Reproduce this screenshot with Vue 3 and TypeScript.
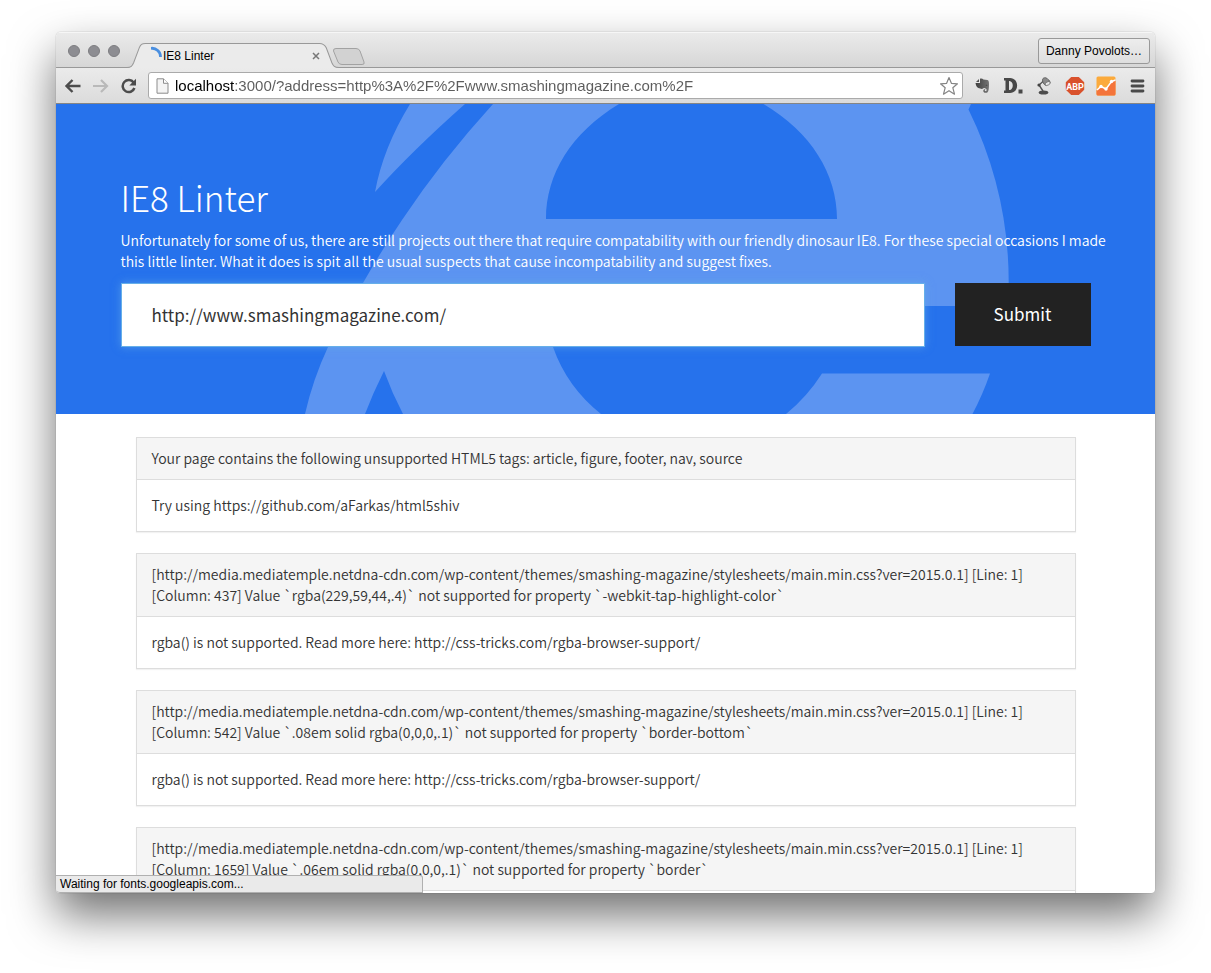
<script setup lang="ts">
import { ref } from 'vue'

interface Issue {
  title: string
  hint: string
}

const location = ref('localhost:3000/?address=http%3A%2F%2Fwww.smashingmagazine.com%2F')
const address = ref('http://www.smashingmagazine.com/')
const sheet =
  '[http://media.mediatemple.netdna-cdn.com/wp-content/themes/smashing-magazine/stylesheets/main.min.css?ver=2015.0.1]'
const rgbaHint = 'rgba() is not supported. Read more here: http://css-tricks.com/rgba-browser-support/'

const issues: Issue[] = [
  {
    title: 'Your page contains the following unsupported HTML5 tags: article, figure, footer, nav, source',
    hint: 'Try using https://github.com/aFarkas/html5shiv',
  },
  {
    title: `${sheet} [Line: 1] [Column: 437] Value \`rgba(229,59,44,.4)\` not supported for property \`-webkit-tap-highlight-color\``,
    hint: rgbaHint,
  },
  {
    title: `${sheet} [Line: 1] [Column: 542] Value \`.08em solid rgba(0,0,0,.1)\` not supported for property \`border-bottom\``,
    hint: rgbaHint,
  },
  {
    title: `${sheet} [Line: 1] [Column: 1659] Value \`.06em solid rgba(0,0,0,.1)\` not supported for property \`border\``,
    hint: '',
  },
]
</script>

<template>
  <div class="desktop">
    <div class="window">
      <header class="titlebar">
        <div class="lights">
          <button type="button" aria-label="Close window"></button>
          <button type="button" aria-label="Minimize window"></button>
          <button type="button" aria-label="Zoom window"></button>
        </div>
        <div class="tab">
          <svg class="tab-shape" viewBox="0 0 208 26" preserveAspectRatio="none" aria-hidden="true">
            <path d="M0 25.500C4 25.500 5 24 6.500 20.500L12 5C13.500 1.500 14.500.5 18 .5H189C192.500.5 194 2 195.500 5L201 20.500C202.500 24 203.500 25.500 208 25.500V26H0Z" fill="#ebebeb" />
            <path d="M0 25.500C4 25.500 5 24 6.500 20.500L12 5C13.500 1.500 14.500.5 18 .5H189C192.500.5 194 2 195.500 5L201 20.500C202.500 24 203.500 25.500 208 25.500" fill="none" stroke="#999" />
          </svg>
          <svg class="spinner" width="12" height="14" viewBox="0 0 12 14" aria-hidden="true">
            <path d="M0 2.300A8.500 8.500 0 0 1 9.500 11" fill="none" stroke="#4a8fe0" stroke-width="2.800" />
          </svg>
          <span class="tab-title">IE8 Linter</span>
          <button class="tab-close" type="button" aria-label="Close tab">
            <svg width="8" height="8" viewBox="0 0 8 8"><path d="M1 1L7 7M7 1L1 7" stroke="#777" stroke-width="1.500" /></svg>
          </button>
        </div>
        <button class="new-tab" type="button" aria-label="New tab">
          <svg width="34" height="18" viewBox="0 0 34 18">
            <path d="M4 .5H24Q27 .5 28 3L32 14Q33 16.500 30 16.500H10Q7 16.500 6 14L1.500 3Q1 .5 4 .5Z" fill="#d2d2d2" stroke="#a2a2a2" />
          </svg>
        </button>
        <button class="profile" type="button">Danny Povolots…</button>
      </header>

      <nav class="toolbar" aria-label="Browser toolbar">
        <button class="tool back" type="button" aria-label="Back">
          <svg width="18" height="16" viewBox="0 0 18 16"><path d="M16.500 8H3M8.500 2L2.500 8L8.500 14" fill="none" stroke="#4c4c4c" stroke-width="2.400" /></svg>
        </button>
        <button class="tool forward" type="button" aria-label="Forward">
          <svg width="18" height="16" viewBox="0 0 18 16"><path d="M1 8H14.500M9 2L15 8L9 14" fill="none" stroke="#b9b9b9" stroke-width="2.200" /></svg>
        </button>
        <button class="tool reload" type="button" aria-label="Reload">
          <svg width="18" height="16" viewBox="0 0 18 16">
            <path d="M13.600 4.600A6 6 0 1 0 14.400 10" fill="none" stroke="#4c4c4c" stroke-width="2.500" />
            <path d="M16 .8V7.500H9.300Z" fill="#4c4c4c" />
          </svg>
        </button>
        <div class="omnibox">
          <svg width="13" height="16" viewBox="0 0 13 16" aria-hidden="true">
            <path d="M1 .8H7.500L12 5.300V15.200H1Z" fill="#f4f4f4" stroke="#8c8c8c" />
            <path d="M7.500.8V5.300H12" fill="#fff" stroke="#8c8c8c" />
          </svg>
          <input v-model="location" type="text" aria-label="Location" spellcheck="false" />
          <button class="star" type="button" aria-label="Bookmark this page">
            <svg width="20" height="20" viewBox="0 0 20 20">
              <path d="M10 1.500L12.500 7.400L18.500 7.800L13.800 11.700L15.500 18.200L10 14.700L4.500 18.200L6.200 11.700L1.500 7.800L7.500 7.400Z" fill="#fff" stroke="#858585" stroke-width="1.200" stroke-linejoin="round" />
            </svg>
          </button>
        </div>
        <div class="extensions">
          <button class="tool" type="button" aria-label="Web clipper">
            <svg width="20" height="20" viewBox="0 0 20 20">
              <defs>
                <linearGradient id="clip-tone" x1="0" x2="1">
                  <stop offset="0" stop-color="#3e3e3e" />
                  <stop offset="1" stop-color="#757575" />
                </linearGradient>
              </defs>
              <path d="M7 3V6H4Z" fill="#555" />
              <path d="M8 2.700C9.500 2.400 10.800 2.700 11.400 3.500L15.500 4C16.800 4.300 17 6 17 8.500C17 12 16.700 15 15.600 16.200C14.600 17.300 11.300 17 11.300 14.900C11.300 13.400 12.600 13 13.500 13.600C13 14 12.600 14.300 12.800 14.800C13.300 15.500 14.700 15.200 14.700 14.100C14.600 12.500 12.600 12 11.600 12C11 13.200 9.200 13 8.200 12.600C5.400 12.300 4 10.500 3.500 7H8Z" fill="url(#clip-tone)" />
              <path d="M13.500 9.300Q14.500 8.300 15.500 9.500Z" fill="#222" />
            </svg>
          </button>
          <button class="tool" type="button" aria-label="Privacy blocker">
            <svg width="20" height="20" viewBox="0 0 20 20">
              <path fill-rule="evenodd" d="M1 2H7C16.500 2 16.500 17 7 17H1V14.500H2.500V4.500H1ZM6 5V14C11 14.500 11 4.500 6 5Z" fill="#484848" />
              <rect x="15.500" y="13.500" width="4" height="4" fill="#484848" />
            </svg>
          </button>
          <button class="tool" type="button" aria-label="Lamp">
            <svg width="20" height="20" viewBox="0 0 20 20">
              <path d="M10 4.500L5 9L9 15" fill="none" stroke="#555" stroke-width="1.400" />
              <circle cx="5" cy="9" r="1.600" fill="#444" />
              <path d="M8.500 4C8.500 1.500 12 .8 13.500 3C15.500 4 16.500 6 15.800 7.500L11.500 9.500C9.500 8 8.500 6 8.500 4Z" fill="#8a8a8a" stroke="#555" stroke-width=".8" />
              <ellipse cx="13.700" cy="7.500" rx="2.800" ry="1.600" transform="rotate(-30 13.700 7.500)" fill="#e6e6e6" stroke="#666" stroke-width=".7" />
              <ellipse cx="9.500" cy="16.500" rx="4.800" ry="2" fill="#4c4c4c" />
            </svg>
          </button>
          <button class="tool" type="button" aria-label="Ad blocker">
            <svg width="20" height="20" viewBox="0 0 20 20">
              <path d="M6.200 1H13.800L19.200 6.300V13.700L13.800 19H6.200L.8 13.700V6.300Z" fill="#d9512c" />
              <text x="10" y="13.500" text-anchor="middle" class="abp">ABP</text>
            </svg>
          </button>
          <button class="tool" type="button" aria-label="Analytics">
            <svg width="20" height="20" viewBox="0 0 20 20">
              <rect x=".5" y=".5" width="19" height="19" rx="1.500" fill="#fbaa3c" />
              <path d="M.5 14.500L5 10.500L10 13L15.500 5L19.500 4V18Q19.500 19.500 18 19.500H2Q.5 19.500 .5 18Z" fill="#f4743b" />
              <path d="M1 14L5 10.500L10 13L15.500 5.500L19.500 4" fill="none" stroke="#fff" stroke-width="1.500" />
              <circle cx="5" cy="10.500" r="1.700" fill="#fff" /><circle cx="10" cy="13" r="1.700" fill="#fff" /><circle cx="15.500" cy="5.500" r="1.700" fill="#fff" />
            </svg>
          </button>
          <button class="tool" type="button" aria-label="Menu">
            <svg width="20" height="20" viewBox="0 0 20 20">
              <path d="M5 5H16M5 10H16M5 15H16" stroke="#4a4a4a" stroke-width="2.800" stroke-linecap="round" />
            </svg>
          </button>
        </div>
      </nav>

      <main class="page">
        <section class="hero">
          <svg class="hero-art" viewBox="56 104 1099 310" preserveAspectRatio="xMidYMin slice" aria-hidden="true">
            <path d="M410 104Q383 148 375 192Q413 150 465 104Z" />
            <path d="M493 104Q442 160 402 220Q383 248 363 283Q346 314 328 347Q313 379 305 414H365Q373 393 384 371Q392 393 403 414H601Q567 387 553 347Q548 333 546 306H1008Q1014 202 968.500 109.500L971 104H763.500C811 132 837 174 837 219H546C546 174 571 133 619 104Z" />
            <path d="M822 373.500H990Q983 394 972.500 414H786Q807 397 822 373.500Z" />
          </svg>
          <div class="container">
            <h1>IE8 Linter</h1>
            <p>
              Unfortunately for some of us, there are still projects out there that require compatability with our
              friendly dinosaur IE8. For these special occasions I made this little linter. What it does is spit all the
              usual suspects that cause incompatability and suggest fixes.
            </p>
            <form @submit.prevent>
              <input v-model="address" type="text" aria-label="Address to check" spellcheck="false" />
              <button type="submit">Submit</button>
            </form>
          </div>
        </section>
        <section class="container results">
          <article v-for="issue in issues" :key="issue.title" class="panel">
            <h2>{{ issue.title }}</h2>
            <p>{{ issue.hint }}</p>
          </article>
        </section>
      </main>
      <div class="status" role="status">Waiting for fonts.googleapis.com...</div>
    </div>
  </div>
</template>

<style>
body {
  margin: 0;
  background: #fff;
}
</style>

<style scoped>
* {
  box-sizing: border-box;
}
button {
  padding: 0;
  border: 0;
  background: none;
  font: inherit;
  color: inherit;
}
svg {
  display: block;
}
.desktop {
  height: 100vh;
  padding: 32px 56px 80px;
  overflow: hidden;
  font-family: "Liberation Sans", Arial, sans-serif;
}
.window {
  position: relative;
  display: flex;
  flex-direction: column;
  height: 100%;
  overflow: hidden;
  border-radius: 5px 5px 4px 4px;
  background: #fff;
}
.desktop::before {
  content: "";
  position: absolute;
  inset: 32px 56px 80px;
  border-radius: 5px;
  box-shadow: 0 0 1px rgba(0, 0, 0, 0.5), 0 22px 46px rgba(0, 0, 0, 0.56);
}
.titlebar {
  display: flex;
  flex: none;
  align-items: flex-end;
  height: 36px;
  padding: 2px 5px 0 12px;
  background: linear-gradient(#ebebeb, #d6d6d6);
  box-shadow: inset 0 1px #f6f6f6, inset 0 -1px #999;
}
.lights {
  display: flex;
  gap: 8px;
  align-self: center;
  margin-right: 7px;
}
.lights button {
  width: 12px;
  height: 12px;
  border: 1px solid #7d7d81;
  border-radius: 50%;
  background: #8d8d92;
}
.tab {
  position: relative;
  display: flex;
  align-items: center;
  width: 212px;
  height: 25px;
  padding: 0 19px 0 24px;
}
.tab-shape {
  position: absolute;
  inset: 0;
  width: 100%;
  height: 100%;
}
.spinner {
  position: relative;
  align-self: flex-start;
  margin-top: 3px;
}
.tab-title {
  position: relative;
  flex: 1;
  font-size: 12px;
  line-height: 16px;
  color: #000;
}
.tab-close {
  position: relative;
}
.new-tab {
  align-self: flex-end;
  margin: 0 auto 2px -7px;
}
.profile {
  align-self: center;
  height: 26px;
  padding: 0 7px;
  border: 1px solid #999;
  border-radius: 3px;
  background: linear-gradient(#ededed, #dedede);
  font-size: 12px;
  color: #000;
}
.toolbar {
  display: flex;
  flex: none;
  align-items: center;
  height: 36px;
  padding: 0 8px;
  background: linear-gradient(#ebebeb, #dbdbdb);
  border-bottom: 1px solid #858585;
}
.back,
.forward,
.reload {
  margin-right: 10px;
}
.omnibox {
  display: flex;
  flex: 1;
  align-items: center;
  height: 27px;
  padding: 0 3px 0 7px;
  border: 1px solid #aaa;
  border-radius: 3px;
  background: #fff;
}
.omnibox input {
  flex: 1;
  min-width: 0;
  margin-left: 6px;
  padding: 0;
  border: 0;
  outline: 0;
  font: 15px/20px "Liberation Sans", Arial, sans-serif;
  color: transparent;
  caret-color: #000;
  background: linear-gradient(90deg, #000 60px, #5c5c5c 60px);
  background-clip: text;
  -webkit-background-clip: text;
}
.extensions {
  display: flex;
  gap: 11px;
  margin-left: 9px;
}
.abp {
  font: bold 9px Roboto, "Liberation Sans", sans-serif;
  fill: #fff;
}
.page {
  flex: 1;
  min-height: 0;
  overflow: hidden;
  font-family: "Noto Sans CJK SC", "Noto Sans", sans-serif;
  font-size: 14px;
  line-height: 21px;
  font-weight: 350;
  color: #333;
}
.container {
  position: relative;
  max-width: 970px;
  margin: 0 auto;
}
.hero {
  position: relative;
  padding: 71px 16px 67px;
  background: #2672ec;
  color: #fff;
}
.hero-art {
  position: absolute;
  inset: 0;
  width: 100%;
  height: 100%;
  fill: #5c94f1;
}
h1 {
  margin: 0 0 11px;
  font-size: 35px;
  line-height: 44px;
  font-weight: 300;
}
.hero p {
  margin: 0 -22px 11px 0;
}
form {
  display: flex;
  gap: 30px;
}
form input {
  flex: 1;
  min-width: 0;
  height: 64px;
  padding: 0 30px 2px;
  border: 1px solid #66afe9;
  outline: 0;
  box-shadow: 0 0 8px rgba(102, 175, 233, 0.6);
  font: inherit;
  font-size: 17px;
  font-weight: 400;
  color: #333;
  background: #fff;
}
form button {
  width: 136px;
  height: 63px;
  padding-bottom: 2px;
  background: #222;
  font-size: 17px;
  font-weight: 400;
}
.results {
  padding: 23px 15px;
}
.panel {
  margin-bottom: 21px;
  border: 1px solid #ddd;
  box-shadow: 0 1px 1px rgba(0, 0, 0, 0.05);
  background: #fff;
}
.panel h2 {
  margin: 0;
  padding: 10px 15px;
  border-bottom: 1px solid #ddd;
  background: #f5f5f5;
  font-size: 14px;
  font-weight: 350;
}
.panel p {
  margin: 0;
  padding: 15px;
}
.status {
  position: absolute;
  bottom: 0;
  left: 0;
  width: 367px;
  height: 18px;
  padding: 0 4px;
  border: 1px solid #b0b0b0;
  border-left: 0;
  border-radius: 0 3px 0 4px;
  background: #eaeaea;
  font-size: 12px;
  line-height: 16px;
  color: #000;
}
</style>
